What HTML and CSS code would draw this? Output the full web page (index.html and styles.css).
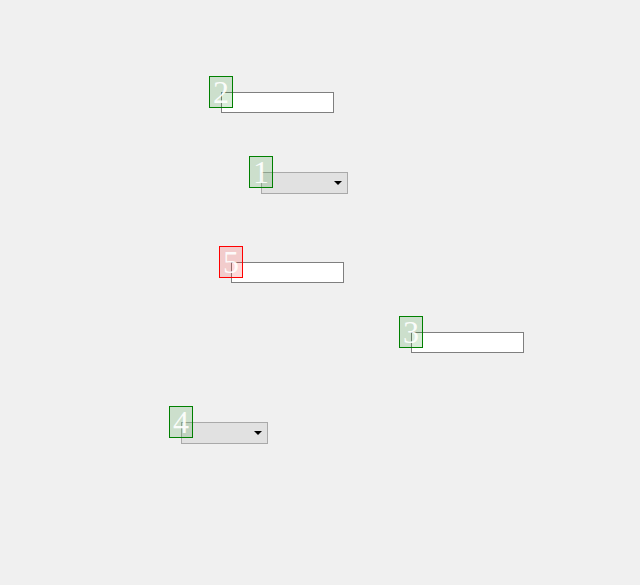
FILE: index.html
```html
<!DOCTYPE html>
<html>
<head>
<meta charset="utf-8">
<link rel="stylesheet" href="styles.css">
</head>
<body>
<div class="canvas">
  <div class="field f-a">
    <input class="text" type="text">
    <span class="badge ok">2</span>
  </div>
  <div class="field f-b">
    <div class="select"><span class="arrow"></span></div>
    <span class="badge ok">1</span>
  </div>
  <div class="field f-c">
    <input class="text" type="text">
    <span class="badge bad">5</span>
  </div>
  <div class="field f-d">
    <input class="text" type="text">
    <span class="badge ok">3</span>
  </div>
  <div class="field f-e">
    <div class="select"><span class="arrow"></span></div>
    <span class="badge ok">4</span>
  </div>
</div>
</body>
</html>
```
FILE: styles.css
```css
html, body {
  margin: 0;
  padding: 0;
  background: #f0f0f0;
}

.canvas {
  position: relative;
  width: 640px;
  height: 585px;
  overflow: hidden;
}

.field {
  position: absolute;
}

.f-a { left: 221px; top: 92px; }
.f-b { left: 261px; top: 172px; }
.f-c { left: 231px; top: 262px; }
.f-d { left: 411px; top: 332px; }
.f-e { left: 181px; top: 422px; }

.text {
  display: block;
  box-sizing: border-box;
  width: 113px;
  height: 21px;
  margin: 0;
  padding: 0 2px;
  border: 1px solid #7f7f7f;
  background: #ffffff;
  outline: none;
}

.select {
  box-sizing: border-box;
  width: 87px;
  height: 22px;
  border: 1px solid #a9a9a9;
  background: #e1e1e1;
  display: flex;
  justify-content: flex-end;
  align-items: flex-start;
  padding: 8px 5px 0 0;
}

.arrow {
  width: 0;
  height: 0;
  border-left: 4px solid transparent;
  border-right: 4px solid transparent;
  border-top: 4px solid #000000;
}

.badge {
  position: absolute;
  left: -12px;
  top: -16px;
  box-sizing: border-box;
  width: 24px;
  height: 32px;
  border: 1px solid #008000;
  background: rgba(0, 128, 0, 0.15);
  color: rgba(255, 255, 255, 0.92);
  font-family: "Liberation Serif", "Times New Roman", serif;
  font-size: 32px;
  line-height: 30px;
  text-align: center;
}

.badge.bad {
  border-color: #ff0000;
  background: rgba(255, 0, 0, 0.15);
}
```
